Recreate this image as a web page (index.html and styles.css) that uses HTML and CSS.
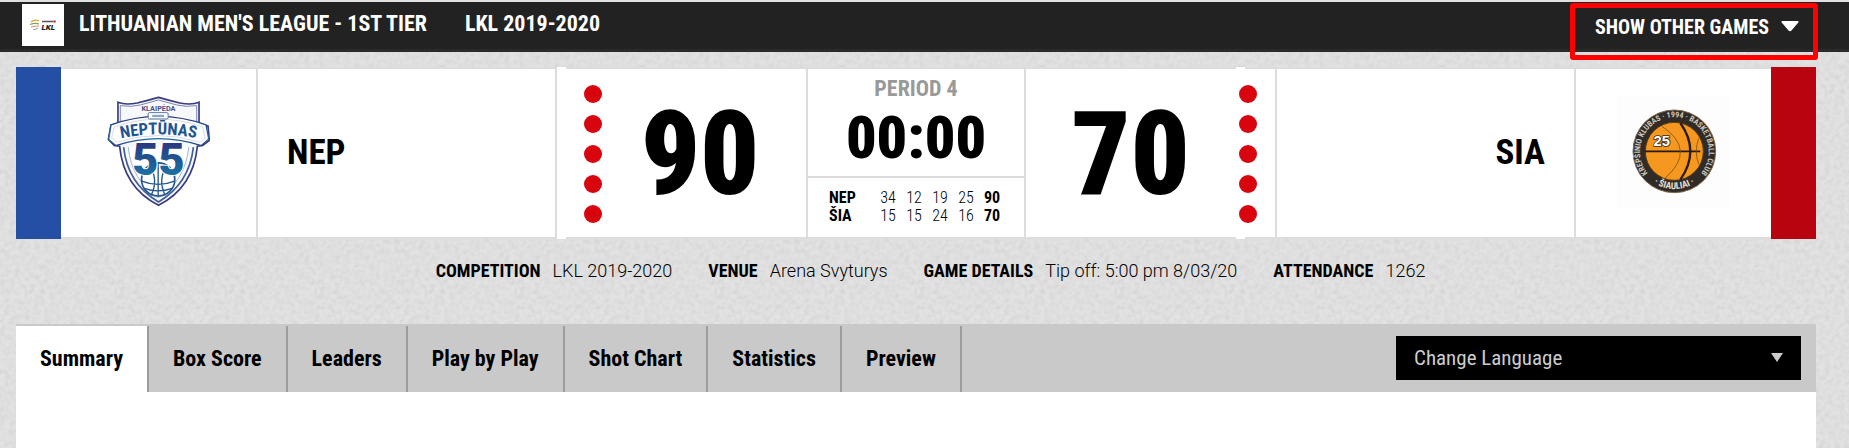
FILE: index.html
```html
<!DOCTYPE html>
<html lang="en">
<head>
<meta charset="utf-8">
<title>NEP v SIA - LKL 2019-2020</title>
<link rel="stylesheet" href="styles.css">
</head>
<body>
<header class="topbar">
  <svg class="league-logo" viewBox="0 0 42 42" aria-label="LKL">
    <rect width="42" height="42" fill="#fff"/>
    <path d="M9 18q4-3 8-1" stroke="#d9a441" stroke-width="1.3" fill="none"/>
    <path d="M8 20.500q5-2 9-.5" stroke="#7fa05a" stroke-width="1.200" fill="none"/>
    <path d="M9 23q4-1 8-1" stroke="#e58a72" stroke-width="1.200" fill="none"/>
    <path d="M11 25.500q3 0 5-1.500" stroke="#999" fill="none"/>
    <path d="M20 17.500h11" stroke="#555" stroke-width="1.500"/>
    <circle cx="32.500" cy="17.500" r="1.300" fill="#c33"/>
    <text x="19.500" y="25.500" class="league-logo-text">LKL</text>
  </svg>
  <h1 class="league">LITHUANIAN MEN'S LEAGUE - 1ST TIER</h1>
  <span class="season">LKL 2019-2020</span>
  <button class="other-games" type="button">SHOW OTHER GAMES
    <svg class="other-games-arrow" viewBox="0 0 18 11" aria-hidden="true"><path d="M1.500 0h15q1.800.2.800 1.500l-6.800 8q-1.500 1.500-3 0l-6.800-8q-1-1.300.8-1.500z" fill="#fff"/></svg>
  </button>
</header>

<main class="page">
  <section class="scoreboard">
    <div class="team-color home-color"></div>
    <div class="cells">
      <div class="cell logo-cell">
        <svg class="nep-logo" viewBox="0 0 310 332" role="img" aria-label="Neptunas">
          <defs>
            <linearGradient id="nep" x1="0" y1="0" x2="0" y2="1"><stop offset="0" stop-color="#2a3478"/><stop offset=".7" stop-color="#1b73a5"/><stop offset="1" stop-color="#2a3f80"/></linearGradient>
            <linearGradient id="nep-digits" x1="0" y1="0" x2="0" y2="1"><stop offset=".2" stop-color="#2a3a80"/><stop offset=".8" stop-color="#1b73a5"/></linearGradient>
            <path id="nep-arc" d="M20 131Q155 98 290 131"/>
          </defs>
          <path d="M33 18q22 9 58 2q36-9 64-17q28 8 64 17q36 7 58-2v65l27 6l4 44l-20 15l-16 2q-12 125-117 178Q50 275 38 150l-16-2L4 130l8-43l21-6z" fill="#f7f8fb" stroke="#383c80" stroke-width="5"/>
          <path d="M40 77V28q34 5 60-2l55-15l55 15q26 7 60 2v49" fill="none" stroke="#7d82b2" stroke-width="3"/>
          <path d="M12 86Q155 35 298 86l8 42l-22 20Q155 106 26 148L5 130z" fill="#fff" stroke="url(#nep)" stroke-width="4"/>
          <path d="M22 92Q155 45 288 92l8 34l-16 12Q155 98 30 138L14 124z" fill="none" stroke="#c3c6dc" stroke-width="2"/>
          <path d="M50 153q12 110 105 165q93-55 105-165" fill="none" stroke="#3f5f98" stroke-width="5"/>
          <path d="M64 153q10 100 91 152q81-52 91-152" fill="#fff" stroke="#a5b4d0" stroke-width="3"/>
          <text x="155" y="43" class="nep-city">KLAIPĖDA</text>
          <rect x="124" y="49" width="60" height="19" rx="4" fill="#fff" stroke="#5b76a8" stroke-width="3"/>
          <path d="M136 59h36" stroke="#8fa3c4" stroke-width="7"/>
          <text class="nep-name"><textPath href="#nep-arc" startOffset="50%">NEPTŪNAS</textPath></text>
          <circle cx="154" cy="250" r="50" fill="#fff" stroke="#23558f" stroke-width="5"/>
          <path d="M154 200v102M105 255q49 20 98 0M112 277q42 15 84 0M128 208q28 43 5 90M180 208q-28 43-5 90" fill="none" stroke="#23558f" stroke-width="4"/>
          <text x="155" y="238" class="nep-number">55</text>
        </svg>
      </div>
      <div class="cell name-cell"><h2 class="team">NEP</h2></div>
      <div class="cell score-cell home-score">
        <div class="fouls"><i class="foul"></i><i class="foul"></i><i class="foul"></i><i class="foul"></i><i class="foul"></i></div>
        <div class="score">90</div>
      </div>
      <div class="cell clock-cell">
        <div class="clock-box">
          <div class="period">PERIOD 4</div>
          <div class="clock">00:00</div>
        </div>
        <table class="periods">
          <tr><th scope="row">NEP</th><td>34</td><td>12</td><td>19</td><td>25</td><td class="total">90</td></tr>
          <tr><th scope="row">ŠIA</th><td>15</td><td>15</td><td>24</td><td>16</td><td class="total">70</td></tr>
        </table>
      </div>
      <div class="cell score-cell away-score">
        <div class="score">70</div>
        <div class="fouls"><i class="foul"></i><i class="foul"></i><i class="foul"></i><i class="foul"></i><i class="foul"></i></div>
      </div>
      <div class="cell name-cell away-name"><h2 class="team">SIA</h2></div>
      <div class="cell logo-cell">
        <svg class="sia-logo" viewBox="0 0 339 339" role="img" aria-label="Siauliai">
          <defs>
            <path id="sia-top" d="M105 248A103 103 0 1 1 239 248"/>
            <path id="sia-bottom" d="M92 250A116 116 0 0 0 252 250"/>
          </defs>
          <rect width="339" height="339" fill="#fdfdfd"/>
          <circle cx="172" cy="169" r="124" fill="#302b27" stroke="#7d674c" stroke-width="3"/>
          <circle cx="172" cy="169" r="87" fill="#f6981f" stroke="#5d3a12" stroke-width="3"/>
          <path d="M84 169h166" stroke="#231a12" stroke-width="5"/>
          <path d="M190 84q60 84 0 170" fill="none" stroke="#2c1d10" stroke-width="7"/>
          <path d="M135 94q105 70 10 155M245 130q-14 38 0 78" fill="none" stroke="#80500f" stroke-width="2.500"/>
          <text x="134" y="153" class="sia-number">25</text>
          <text class="sia-ring"><textPath href="#sia-top" startOffset="50%">KREPŠINIO KLUBAS · 1994 · BASKETBALL CLUB</textPath></text>
          <text class="sia-city"><textPath href="#sia-bottom" startOffset="50%">· ŠIAULIAI ·</textPath></text>
        </svg>
      </div>
    </div>
    <div class="team-color away-color"></div>
  </section>

  <dl class="details">
    <div class="detail"><dt>COMPETITION</dt><dd>LKL 2019-2020</dd></div>
    <div class="detail"><dt>VENUE</dt><dd>Arena Svyturys</dd></div>
    <div class="detail"><dt>GAME DETAILS</dt><dd>Tip off: 5:00 pm 8/03/20</dd></div>
    <div class="detail"><dt>ATTENDANCE</dt><dd>1262</dd></div>
  </dl>

  <nav class="tabs">
    <a class="tab active" href="#summary">Summary</a>
    <a class="tab" href="#boxscore">Box Score</a>
    <a class="tab" href="#leaders">Leaders</a>
    <a class="tab" href="#playbyplay">Play by Play</a>
    <a class="tab" href="#shotchart">Shot Chart</a>
    <a class="tab" href="#statistics">Statistics</a>
    <a class="tab" href="#preview">Preview</a>
    <select class="language" aria-label="Change Language"><option>Change Language</option></select>
  </nav>
  <section class="content" id="summary"></section>
</main>
</body>
</html>
```
FILE: styles.css
```css
* { box-sizing: border-box; }

body {
  margin: 0;
  min-height: 100vh;
  display: flex;
  flex-direction: column;
  color: #000;
  font-family: "Roboto Condensed", "Liberation Sans Narrow", Roboto, sans-serif;
  background: #e2e2e2 url("data:image/svg+xml,%3Csvg xmlns='http://www.w3.org/2000/svg' width='200' height='200'%3E%3Cfilter id='n'%3E%3CfeTurbulence type='fractalNoise' baseFrequency='.2' numOctaves='3' stitchTiles='stitch'/%3E%3CfeColorMatrix values='0 0 0 0 0 0 0 0 0 0 0 0 0 0 0 .11 0 0 0 -.04'/%3E%3C/filter%3E%3Crect width='200' height='200' filter='url(%23n)'/%3E%3C/svg%3E");
}

.topbar {
  display: flex;
  align-items: flex-start;
  height: 52px;
  padding: 2px 31px 0 22px;
  background: #222;
  border-top: 2px solid #dfe1e3;
  border-bottom: 3px solid #2a2a2a;
  color: #fff;
  line-height: 40px;
}

.league-logo { width: 42px; height: 42px; flex: none; }
.league-logo-text { font: italic 900 8px Roboto, sans-serif; fill: #222; }

.league, .season {
  margin: 0;
  font-size: 22px;
  font-weight: 700;
  white-space: nowrap;
}
.league { margin-left: 15px; }
.season { margin-left: 38px; }

.other-games {
  position: relative;
  display: flex;
  align-items: center;
  justify-content: flex-end;
  gap: 12px;
  width: 248px;
  height: 57px;
  margin: -1px 0 0 auto;
  padding: 0 14px 10px 0;
  flex: none;
  background: none;
  border: 5px solid #f00;
  border-radius: 3px;
  color: #fff;
  font: 700 20px/24px "Roboto Condensed", "Liberation Sans Narrow", Roboto, sans-serif;
  white-space: nowrap;
}
.other-games-arrow { width: 18px; height: 11px; }

.page {
  flex: 1;
  display: flex;
  flex-direction: column;
  padding: 15px 33px 0 16px;
}

.scoreboard { display: flex; }
.team-color { width: 45px; flex: none; }
.home-color { background: #244fa5; }
.away-color { background: #b8040e; }

.cells {
  flex: 1;
  display: grid;
  grid-template-columns: 195fr 297fr 249fr 216fr 249fr 297fr 195fr;
  gap: 2px;
  padding: 2px 0;
  background: #dcdcdc;
}
.cell {
  min-width: 0;
  min-height: 168px;
  display: flex;
  align-items: center;
  background: #fff;
}
.logo-cell { justify-content: center; padding-bottom: 4px; }
.nep-logo { width: 103px; height: 111px; }
.nep-city { font: 700 22px Roboto, sans-serif; fill: #4a4f88; text-anchor: middle; }
.nep-name { font: 700 50px "Roboto Condensed", "Liberation Sans Narrow", Roboto, sans-serif; fill: #22558f; text-anchor: middle; }
.nep-number { font: 900 136px Roboto, sans-serif; fill: url(#nep-digits); stroke: #fff; stroke-width: 6px; paint-order: stroke; text-anchor: middle; }
.sia-logo { width: 113px; height: 113px; }
.sia-number { font: 900 44px "Liberation Sans", sans-serif; fill: #fff; stroke: #3d2a18; stroke-width: 5px; paint-order: stroke; text-anchor: middle; }
.sia-ring { font: 700 24px "Roboto Condensed", "Liberation Sans Narrow", Roboto, sans-serif; fill: #c9c4bc; text-anchor: middle; }
.sia-city { font: 700 28px "Roboto Condensed", "Liberation Sans Narrow", Roboto, sans-serif; fill: #e4e0da; text-anchor: middle; }

.name-cell { padding: 0 29px; }
.away-name { justify-content: flex-end; }
.team { margin: 0; font-size: 35px; line-height: 40px; }

.score-cell { position: relative; padding-top: 2px; }
.home-score { padding-right: 8px; padding-left: 27px; }
.away-score { padding-right: 18px; }
.away-score .score { padding-right: 4px; }
.score-cell::before {
  content: "";
  position: absolute;
  top: -2px;
  bottom: -2px;
  left: 0;
  width: 9px;
  background: #fff;
}
.away-score::before { left: auto; right: 30px; }
.fouls { position: relative; display: flex; flex-direction: column; gap: 12px; }
.foul { width: 18px; height: 18px; border-radius: 50%; background: #d8040e; }
.score {
  flex: 1;
  font-size: 116px;
  font-weight: 900;
  line-height: 160px;
  text-align: center;
}

.clock-cell { flex-direction: column; align-items: stretch; }
.clock-box { height: 109px; padding-top: 7px; border-bottom: 2px solid #dcdcdc; text-align: center; }
.period { color: #999; font-size: 22px; font-weight: 700; line-height: 26px; }
.clock { font-size: 60px; font-weight: 900; line-height: 72px; }
.periods { margin: 11px 19px 0 21px; border-collapse: collapse; font-size: 16px; line-height: 18px; }
.periods th { padding: 0; text-align: left; }
.periods td { width: 26px; padding: 0; text-align: center; font-weight: 300; }
.periods .total { font-weight: 700; }

.details {
  display: flex;
  justify-content: center;
  gap: 36px;
  margin: 0;
  padding: 20px 0 41px 29px;
  line-height: 24px;
  font-size: 18px;
  white-space: nowrap;
}
.detail { display: flex; gap: 12px; }
.detail dt { font-weight: 700; }
.detail dd { margin: 0; font-family: Roboto, sans-serif; font-weight: 300; }

.tabs {
  display: flex;
  align-items: stretch;
  height: 68px;
  padding-top: 2px;
  background: #c9c9c9;
}
.tab {
  padding: 0 24px;
  border-right: 2px solid #9d9d9d;
  color: #000;
  font-size: 22px;
  font-weight: 700;
  line-height: 66px;
  text-decoration: none;
  white-space: nowrap;
}
.tab.active { background: #fff; }
.language {
  appearance: none;
  width: 405px;
  height: 44px;
  margin: 10px 15px 0 auto;
  padding: 0 18px;
  border: 0;
  border-radius: 0;
  color: #ccc;
  font: 400 21px/40px "Roboto Condensed", "Liberation Sans Narrow", Roboto, sans-serif;
  background: #000 url("data:image/svg+xml,%3Csvg xmlns='http://www.w3.org/2000/svg' width='12' height='9'%3E%3Cpath d='M0 0h12L6 9z' fill='%23ccc'/%3E%3C/svg%3E") no-repeat right 18px top 17px;
}
.content { flex: 1; min-height: 56px; background: #fff; }
```
